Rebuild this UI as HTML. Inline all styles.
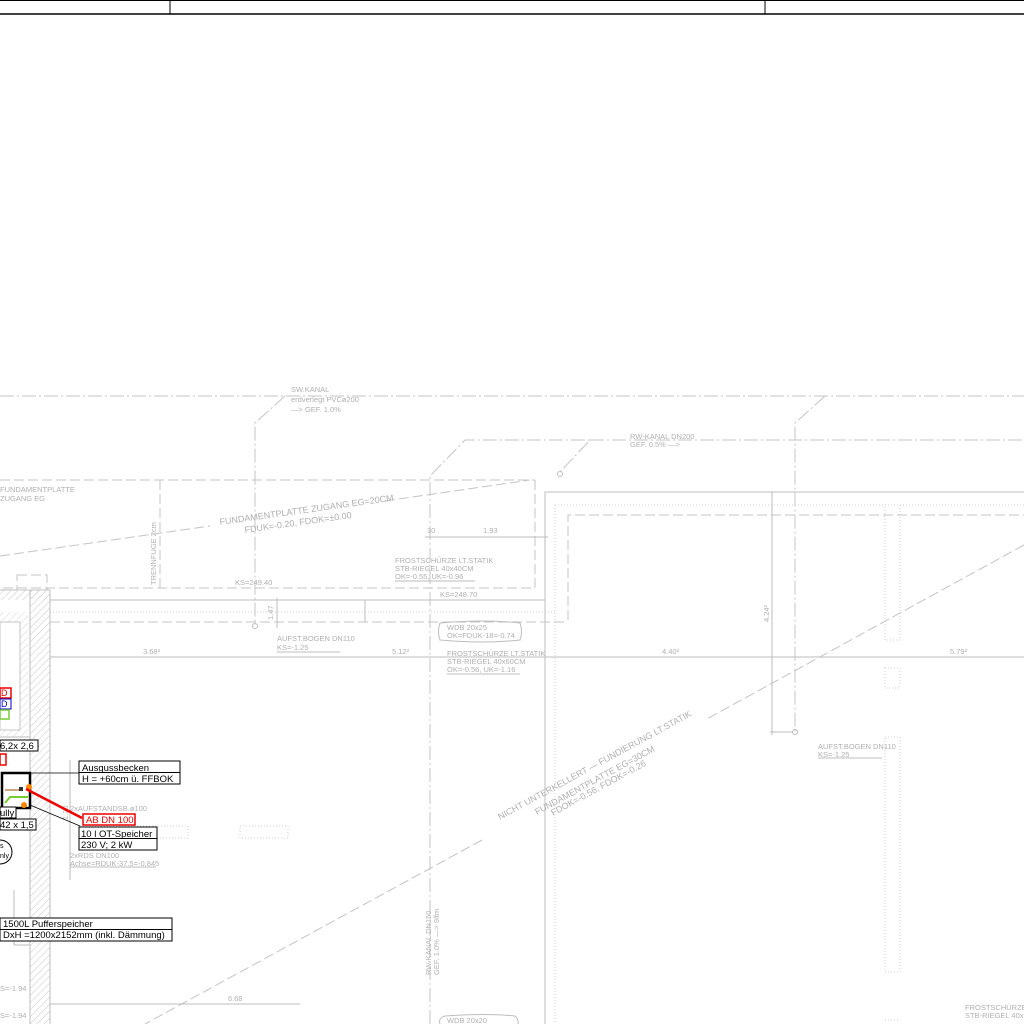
<!DOCTYPE html>
<html><head><meta charset="utf-8"><style>
html,body{margin:0;padding:0;background:#fff;width:1024px;height:1024px;overflow:hidden}
svg{display:block}
.g{stroke:#bdbdbd;stroke-width:1;fill:none}
.d{stroke:#c4c4c4;stroke-width:1;fill:none;stroke-dasharray:10 4}
.dd{stroke:#c4c4c4;stroke-width:1;fill:none;stroke-dasharray:14 3 2 3}
.dt{stroke:#cfcfcf;stroke-width:1;fill:none;stroke-dasharray:1 2}
text{font-family:"Liberation Sans",sans-serif}
.t{fill:#b0b0b0;font-size:7.5px}
.k{fill:#000;font-size:9.5px}
</style></head><body>
<svg width="1024" height="1024" viewBox="0 0 1024 1024" xmlns="http://www.w3.org/2000/svg">
<defs>
<pattern id="h" width="5" height="5" patternUnits="userSpaceOnUse" patternTransform="rotate(45)">
<line x1="0" y1="0" x2="0" y2="5" stroke="#c8c8c8" stroke-width="1"/></pattern>
</defs>
<!-- title strip -->
<line x1="0" y1="0.5" x2="1024" y2="0.5" stroke="#000"/>
<line x1="0" y1="14" x2="1024" y2="14" stroke="#000" stroke-width="1.5"/>
<line x1="170" y1="0" x2="170" y2="14" stroke="#000"/>
<line x1="765" y1="0" x2="765" y2="14" stroke="#000"/>

<!-- top dashdot line -->
<line class="dd" x1="0" y1="396" x2="1024" y2="396"/>
<!-- sw kanal -->
<polyline class="dd" points="285,396 255,423 255,625"/>
<text class="t" x="291" y="392">SW.KANAL</text>
<text class="t" x="291" y="402">erdverlegt PVCø200</text>
<text class="t" x="291" y="412">—&gt; GEF. 1.0%</text>
<polyline class="dd" points="825,396 795,423 795,732"/>
<!-- RW kanal -->
<polyline class="dd" points="430,1024 430,476 465,440 590,440 560,472"/>
<circle cx="560" cy="474" r="2.5" class="g"/>
<line class="dd" x1="590" y1="440" x2="1024" y2="440"/>
<text class="t" x="630" y="439">RW-KANAL DN200</text>
<text class="t" x="630" y="447">GEF. 0.5% —&gt;</text>

<!-- fundament zugang dashed rect -->
<line class="d" x1="0" y1="480" x2="535" y2="480"/>
<polyline class="d" points="535,480 535,588 0,588"/>
<line class="d" x1="160" y1="480" x2="160" y2="588"/>
<text class="t" transform="translate(156,585) rotate(-90)">TRENNFUGE 2cm</text>
<text class="t" x="0" y="492">FUNDAMENTPLATTE</text>
<text class="t" x="0" y="501">ZUGANG EG</text>
<line class="d" x1="0" y1="556" x2="210" y2="526"/>
<line class="d" x1="385" y1="501" x2="530" y2="480"/>
<text class="t" transform="translate(220,525) rotate(-8)" style="font-size:9px">FUNDAMENTPLATTE ZUGANG EG=20CM</text>
<text class="t" transform="translate(245,533) rotate(-8)" style="font-size:9px">FDUK=-0.20, FDOK=±0.00</text>

<!-- right big rects -->
<polyline class="g" points="545,1024 545,492 1024,492"/>
<polyline class="d" points="568,620 568,515 1024,515"/>
<line class="dt" x1="555" y1="505" x2="1024" y2="505"/>
<line class="dt" x1="555" y1="505" x2="555" y2="1024"/>
<!-- horizontal band -->
<line class="g" x1="50" y1="600" x2="545" y2="600"/>
<line class="dt" x1="50" y1="612" x2="555" y2="612"/>
<line class="d" x1="50" y1="622" x2="568" y2="622"/>
<line class="g" x1="365" y1="600" x2="365" y2="622"/>
<text class="t" x="235" y="585">KS=249.40</text>
<text class="t" x="440" y="597">KS=248.70</text>
<!-- dims -->
<line class="g" x1="425" y1="537" x2="548" y2="537"/>
<text class="t" x="427" y="533">30</text>
<text class="t" x="483" y="533">1.93</text>
<text class="t" x="395" y="563">FROSTSCHÜRZE LT.STATIK</text>
<text class="t" x="395" y="571">STB-RIEGEL 40x40CM</text>
<text class="t" x="395" y="579">OK=-0.55, UK=-0.96</text>
<line class="g" x1="395" y1="581" x2="475" y2="581"/>
<circle cx="255" cy="626" r="2.5" class="g"/>
<line class="g" x1="277" y1="598" x2="277" y2="628"/>
<text class="t" transform="translate(273,620) rotate(-90)">1.47</text>
<text class="t" x="277" y="641">AUFST.BOGEN DN110</text>
<text class="t" x="277" y="650">KS=-1.25</text>
<line class="g" x1="277" y1="652" x2="340" y2="652"/>
<path class="g" d="M440 623 Q437 632 440 640 Q485 644 520 640 Q523 632 520 623 Q485 619 440 623Z"/>
<text class="t" x="447" y="630">WDB 20x25</text>
<text class="t" x="447" y="638">OK=FDUK-18=-0.74</text>
<text class="t" x="447" y="656">FROSTSCHÜRZE LT.STATIK</text>
<text class="t" x="447" y="664">STB-RIEGEL 40x60CM</text>
<text class="t" x="447" y="672">OK=-0.56, UK=-1.16</text>
<line class="g" x1="447" y1="674" x2="520" y2="674"/>

<!-- main dim line -->
<line class="g" x1="50" y1="657" x2="1024" y2="657"/>
<text class="t" x="143" y="654">3.68²</text>
<text class="t" x="392" y="654">5.12²</text>
<text class="t" x="662" y="654">4.40²</text>
<text class="t" x="950" y="654">5.79²</text>
<line class="g" x1="772" y1="492" x2="772" y2="735"/>
<text class="t" transform="translate(769,622) rotate(-90)">4.24²</text>
<circle cx="795" cy="732" r="2.5" class="g"/>
<line class="g" x1="770" y1="732" x2="792" y2="732"/>
<text class="t" x="818" y="749">AUFST.BOGEN DN110</text>
<text class="t" x="818" y="757">KS=-1.25</text>
<line class="g" x1="818" y1="758" x2="882" y2="758"/>
<rect class="dt" x="885" y="505" width="15" height="135"/>
<rect class="dt" x="885" y="668" width="15" height="20"/>
<rect class="dt" x="885" y="737" width="15" height="235"/>
<line class="dt" x1="885" y1="1020" x2="900" y2="1020"/>

<!-- diagonal dashed big -->
<line class="d" x1="1024" y1="545" x2="705" y2="720"/>
<line class="d" x1="482" y1="840" x2="145" y2="1024"/>
<text class="t" transform="translate(500,820) rotate(-28.5)" style="font-size:9px">NICHT UNTERKELLERT — FUNDIERUNG LT.STATIK</text>
<text class="t" transform="translate(537,815) rotate(-28.5)" style="font-size:9px">FUNDAMENTPLATTE EG=30CM</text>
<text class="t" transform="translate(553,816) rotate(-28.5)" style="font-size:9px">FDOK=-0.56, FDOK=-0.26</text>
<text class="t" transform="translate(431,975) rotate(-90)">RW-KANAL DN150</text>
<text class="t" transform="translate(439,975) rotate(-90)">GEF. 1.0% —&gt; 9lfm</text>
<path class="g" d="M440 1024 Q438 1018 445 1016 Q485 1013 515 1016 Q519 1020 518 1024"/>
<text class="t" x="447" y="1023">WDB 20x20</text>
<text class="t" x="965" y="1010">FROSTSCHÜRZE LT.STATIK</text>
<text class="t" x="965" y="1018">STB-RIEGEL 40x60</text>
<line class="g" x1="50" y1="1004" x2="300" y2="1004"/>
<text class="t" x="228" y="1001">6.68</text>

<!-- left wall -->
<rect x="30" y="590" width="20" height="434" fill="url(#h)"/>
<line class="g" x1="30" y1="590" x2="30" y2="1024"/>
<line class="g" x1="50" y1="590" x2="50" y2="1024"/>
<rect x="0" y="590" width="50" height="10" fill="url(#h)"/>
<line class="g" x1="0" y1="590" x2="50" y2="590"/>
<rect x="0" y="612" width="28" height="125" fill="url(#h)" opacity="0.8"/>
<rect x="0" y="622" width="20" height="108" fill="#fff" stroke="#c4c4c4"/>
<rect class="d" x="17" y="575" width="30" height="15"/>
<line class="g" x1="0" y1="737" x2="30" y2="737"/>
<line class="g" x1="70" y1="760" x2="70" y2="880"/>
<text class="t" transform="translate(68,820) rotate(-90)">1.20</text>
<rect class="dt" x="80" y="826" width="108" height="12"/>
<rect class="dt" x="240" y="826" width="48" height="12"/>
<line class="g" x1="14" y1="890" x2="14" y2="945"/>
<line class="g" x1="14" y1="945" x2="30" y2="945"/>
<text class="t" x="70" y="811">2xAUFSTANDSB.ø100</text>
<text class="t" x="70" y="858">2xRDS DN100</text>
<text class="t" x="70" y="866">Achse=RDUK-37.5=-0.845</text>
<line class="g" x1="70" y1="867" x2="156" y2="867"/>
<text class="t" x="0" y="991">S=-1.94</text>
<text class="t" x="0" y="1018">S=-1.94</text>
<circle cx="0" cy="852" r="12" fill="none" stroke="#000"/>
<text class="k" x="0" y="848" style="font-size:7px">s</text>
<text class="k" x="0" y="858" style="font-size:7px">nly</text>

<!-- colored labels left -->
<rect x="0" y="688" width="11" height="10" fill="#fff" stroke="#e00" stroke-width="1.5"/>
<text x="1" y="696" style="font-size:9px;fill:#e00">D</text>
<rect x="0" y="699" width="11" height="10" fill="#fff" stroke="#00c" stroke-width="1"/>
<text x="1" y="707" style="font-size:9px;fill:#00c">D</text>
<rect x="0" y="710" width="9" height="9" fill="none" stroke="#7c3" stroke-width="1.5"/>

<rect x="0" y="740" width="38" height="11" fill="#fff" stroke="#000"/>
<text class="k" x="0" y="749">6,2x 2,6</text>
<rect x="0" y="754" width="6" height="11" fill="#fff" stroke="#e00" stroke-width="1.5"/>
<!-- fixture -->
<rect x="2" y="773" width="28" height="35" fill="none" stroke="#000" stroke-width="2.5"/>
<line x1="5" y1="790" x2="22" y2="790" stroke="#b85" stroke-width="1.5"/>
<rect x="19" y="787" width="4" height="4" fill="#333"/>
<polyline points="5,803 10,797 28,797" fill="none" stroke="#7c3" stroke-width="2"/>
<circle cx="29" cy="787" r="3" fill="#f80"/>
<circle cx="24" cy="805" r="3" fill="#f80"/>
<line x1="26" y1="789" x2="82" y2="818" stroke="#e00" stroke-width="2.5"/>
<line x1="30" y1="773" x2="80" y2="773" stroke="#000" stroke-width="0.8"/>
<line x1="30" y1="805" x2="80" y2="826" stroke="#000" stroke-width="0.8"/>
<rect x="0" y="807" width="16" height="11" fill="#fff" stroke="#000"/>
<text class="k" x="0" y="816">ully</text>
<rect x="0" y="819" width="36" height="11" fill="#fff" stroke="#000"/>
<text class="k" x="0" y="828">42 x 1,5</text>

<rect x="79" y="761" width="101" height="23" fill="#fff" stroke="#000"/>
<line x1="79" y1="772.5" x2="180" y2="772.5" stroke="#000"/>
<text class="k" x="82" y="771">Ausgussbecken</text>
<text class="k" x="82" y="782">H = +60cm ü. FFBOK</text>
<rect x="83" y="814" width="52" height="11" fill="#fff" stroke="#e00" stroke-width="1.5"/>
<text x="86" y="823" style="font-size:9.5px;fill:#e00">AB DN 100</text>
<rect x="79" y="827" width="78" height="23" fill="#fff" stroke="#000"/>
<line x1="79" y1="838.5" x2="157" y2="838.5" stroke="#000"/>
<text class="k" x="81" y="837">10 l OT-Speicher</text>
<text class="k" x="81" y="848">230 V; 2 kW</text>

<rect x="0" y="918" width="172" height="23" fill="#fff" stroke="#000"/>
<line x1="0" y1="929.5" x2="172" y2="929.5" stroke="#000"/>
<text class="k" x="3" y="927">1500L Pufferspeicher</text>
<text class="k" x="3" y="938">DxH =1200x2152mm (inkl. Dämmung)</text>
</svg>
</body></html>
